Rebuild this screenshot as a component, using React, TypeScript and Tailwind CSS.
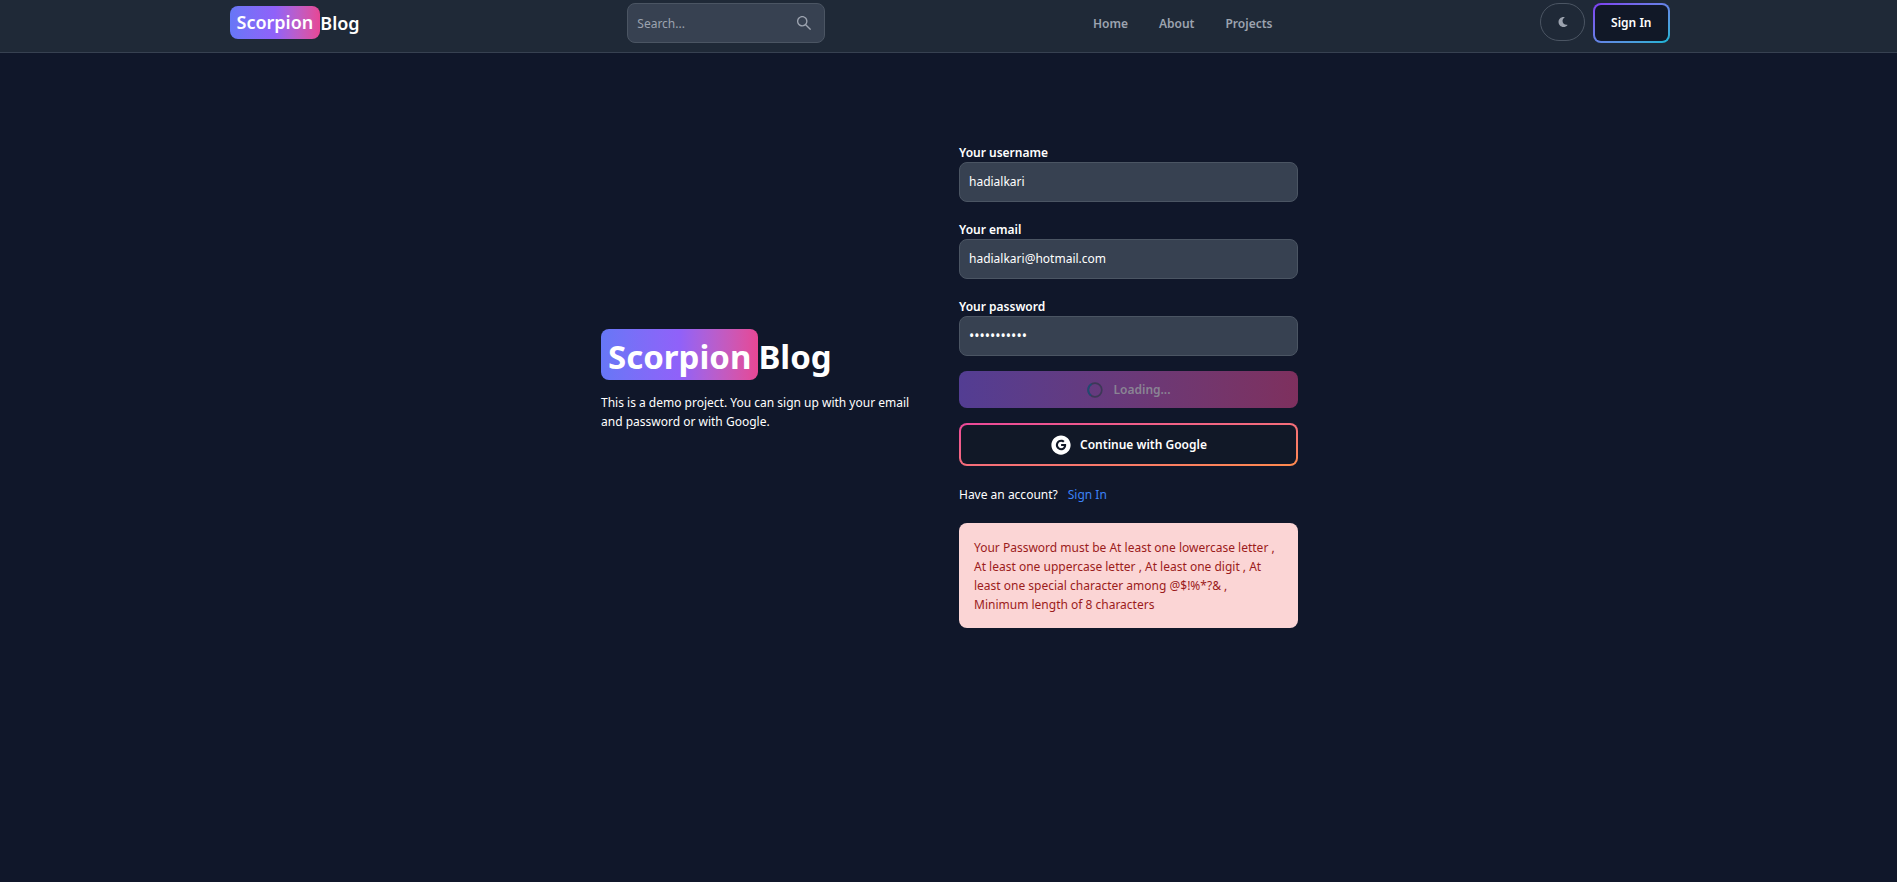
import { FaMoon } from "react-icons/fa";
import { AiFillGoogleCircle, AiOutlineSearch } from "react-icons/ai";

const brandGradient = "bg-gradient-to-r from-[#6677f6] via-[#9061f9] to-[#e74694]";
const fieldClasses =
  "h-10 w-full rounded-lg border border-[#4b5563] bg-[#374151] px-[9px] text-white outline-none placeholder:text-[#9ca3af]";

const navLinks = ["Home", "About", "Projects"];

const fields = [
  { id: "username", label: "Your username", type: "text", value: "hadialkari", style: "pb-[2px] text-xs" },
  { id: "email", label: "Your email", type: "email", value: "hadialkari@hotmail.com", style: "pb-[2px] text-xs" },
  { id: "password", label: "Your password", type: "password", value: "Password123", style: "pb-[2px] text-sm" },
];

function Header() {
  return (
    <header className="border-b border-[#374151] bg-[#1f2937] pt-[3px] pb-[9px] pl-[2px]">
      <div className="mx-auto flex max-w-[1440px] items-start justify-between">
        <a href="#" className="mt-[3px] flex items-center text-lg font-semibold whitespace-nowrap text-white">
          <span className={`rounded-lg px-[7px] leading-[33px] ${brandGradient}`}>Scorpion</span>
          Blog
        </a>
        <form className="relative w-[198px]">
          <input type="text" aria-label="Search" placeholder="Search..." className={`${fieldClasses} text-xs`} />
          <AiOutlineSearch className="absolute top-[11px] right-3 size-[18px] text-[#9ca3af]" />
        </form>
        <nav className="flex gap-[31px] text-xs leading-[42px] font-semibold text-[#9ca3af]">
          {navLinks.map((name) => (
            <a key={name} href="#" className="h-10">
              {name}
            </a>
          ))}
        </nav>
        <div className="flex items-start gap-2">
          <button
            type="button"
            aria-label="Toggle theme"
            className="flex h-[38px] w-[45px] items-center justify-center rounded-full border border-[#4b5563] text-[#9ca3af]"
          >
            <FaMoon className="size-[10px]" />
          </button>
          <button
            type="button"
            className="h-10 rounded-lg bg-gradient-to-br from-[#7e3af2] to-[#06b6d4] p-[2px] text-xs font-semibold text-white"
          >
            <span className="flex h-full items-center rounded-md bg-[#111827] px-4 whitespace-nowrap">Sign In</span>
          </button>
        </div>
      </div>
    </header>
  );
}

function SignUpForm() {
  return (
    <div className="flex-1">
      <form className="flex flex-col gap-[15px]">
        {fields.map((field) => (
          <div key={field.id}>
            <label htmlFor={field.id} className="block pt-1 text-xs leading-[18px] font-semibold">
              {field.label}
            </label>
            <input
              id={field.id}
              type={field.type}
              defaultValue={field.value}
              className={`${fieldClasses} ${field.style}`}
            />
          </div>
        ))}
        <button
          type="submit"
          disabled
          className="flex h-[37px] items-center justify-center gap-[11px] rounded-lg bg-gradient-to-r from-[#533d93] to-[#7e305e] text-xs font-semibold text-[#8a8494]"
        >
          <svg viewBox="0 0 16 16" className="size-4" fill="none" strokeWidth="1.7">
            <circle cx="8" cy="8" r="6.8" stroke="#3d3857" />
            <path d="M4 13.5A6.8 6.8 0 0 1 4.6 2.1" stroke="#1f4b73" />
          </svg>
          Loading...
        </button>
        <button
          type="button"
          className="h-[43px] rounded-lg bg-gradient-to-br from-[#ec4899] to-[#ff8a4c] p-[2px] text-xs font-semibold text-white"
        >
          <span className="flex h-full items-center justify-center gap-2 rounded-md bg-[#111827]">
            <AiFillGoogleCircle className="size-[22px]" />
            Continue with Google
          </span>
        </button>
      </form>
      <div className="mt-[18px] flex gap-[10px] text-xs leading-[22px]">
        <span>Have an account?</span>
        <a href="#" className="text-[#3b82f6]">
          Sign In
        </a>
      </div>
      <div
        role="alert"
        className="mt-[17px] rounded-lg bg-[#fbd5d5] px-[15px] pt-[15px] pb-[14px] text-xs leading-[19px] text-[#9b1c1c]"
      >
        Your Password must be At least one lowercase letter , At least one uppercase letter , At least one digit , At
        least one special character among @$!%*?&amp; , Minimum length of 8 characters
      </div>
    </div>
  );
}

export default function App() {
  return (
    <div className="min-h-screen bg-[#10172a] font-['Noto_Sans','Open_Sans',sans-serif] text-white">
      <Header />
      <div className="pt-[87px] pl-[2px]">
        <main className="mx-auto flex max-w-[697px] items-center gap-[19px]">
          <div className="flex-1 pb-[9px]">
            <h1 className="flex text-[33px] leading-[47px] font-bold">
              <span className={`rounded-lg px-[7px] pt-1 ${brandGradient}`}>Scorpion</span>
              <span className="pt-1">Blog</span>
            </h1>
            <p className="mt-[13px] pr-[15px] text-xs leading-[19px]">
              This is a demo project. You can sign up with your email and password or with Google.
            </p>
          </div>
          <SignUpForm />
        </main>
      </div>
    </div>
  );
}
